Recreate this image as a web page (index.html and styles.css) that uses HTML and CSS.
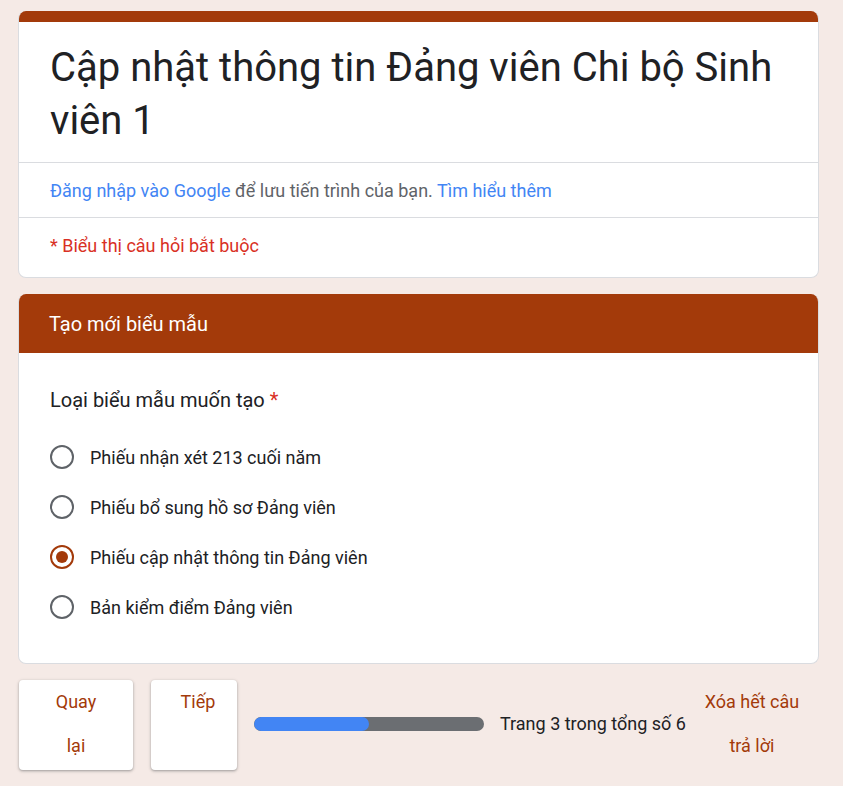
FILE: index.html
```html
<!DOCTYPE html>
<html lang="vi">
<head>
<meta charset="utf-8">
<title>Cập nhật thông tin Đảng viên Chi bộ Sinh viên 1</title>
<link rel="stylesheet" href="styles.css">
</head>
<body>
<div class="page">
  <div class="card head-card">
    <div class="topbar"></div>
    <h1 class="title">Cập nhật thông tin Đảng viên Chi bộ Sinh viên 1</h1>
    <div class="row signin"><span><a class="link">Đăng nhập vào Google</a> để lưu tiến trình của bạn. <a class="link">Tìm hiểu thêm</a></span></div>
    <div class="row required">* Biểu thị câu hỏi bắt buộc</div>
  </div>

  <div class="card section-card">
    <div class="section-head">Tạo mới biểu mẫu</div>
    <div class="question">
      <div class="q-title">Loại biểu mẫu muốn tạo <span class="star">*</span></div>
      <div class="options">
        <div class="opt"><span class="radio"></span><span>Phiếu nhận xét 213 cuối năm</span></div>
        <div class="opt"><span class="radio"></span><span>Phiếu bổ sung hồ sơ Đảng viên</span></div>
        <div class="opt"><span class="radio checked"></span><span>Phiếu cập nhật thông tin Đảng viên</span></div>
        <div class="opt"><span class="radio"></span><span>Bản kiểm điểm Đảng viên</span></div>
      </div>
    </div>
  </div>

  <div class="nav">
    <button class="btn btn-back">Quay lại</button>
    <button class="btn btn-next">Tiếp</button>
    <div class="progress"><div class="fill" style="width:50%"></div></div>
    <div class="page-count">Trang 3 trong tổng số 6</div>
    <button class="clear">Xóa hết câu trả lời</button>
  </div>
</div>
</body>
</html>
```

FILE: styles.css
```css
* { box-sizing: border-box; }
html, body { margin: 0; padding: 0; }
body {
  background: #f5eae6;
  font-family: Roboto, "Noto Sans", Arial, sans-serif;
  color: #202124;
}
.page {
  width: 801px;
  margin-left: 18px;
  padding-top: 11px;
  display: flex;
  flex-direction: column;
  gap: 16px;
}
.card {
  background: #fff;
  border: 1px solid #dadce0;
  border-radius: 8px;
  overflow: hidden;
}
.head-card { border-top: none; }
.topbar { height: 11px; background: #a33a0a; }
.title {
  margin: 0;
  font-weight: 400;
  font-size: 40px;
  line-height: 53px;
  padding: 19px 40px 15px 31px;
  border-bottom: 1px solid #dadce0;
}
.row {
  padding: 0 31px;
  font-size: 18px;
  height: 55px;
  display: flex;
  align-items: center;
}
.signin { border-bottom: 1px solid #dadce0; color: #5f6368; }
.link { color: #4285f4; }
.required { color: #d93025; height: 59px; padding-bottom: 4px; }

.section-card { border-top: none; }
.section-head {
  background: #a33a0a;
  color: #fff;
  font-size: 20px;
  height: 59px;
  display: flex;
  align-items: center;
  padding-left: 30px;
}
.question { padding: 35px 31px 31px; }
.q-title { font-size: 20px; line-height: 24px; }
.star { color: #d93025; }
.options { margin-top: 20px; display: flex; flex-direction: column; }
.opt {
  display: flex;
  align-items: center;
  height: 50px;
  font-size: 18px;
  gap: 16px;
}
.radio {
  width: 24px; height: 24px;
  border: 2px solid #5f6368;
  border-radius: 50%;
  display: flex; align-items: center; justify-content: center;
  flex: none;
}
.radio.checked { border-color: #a33a0a; }
.radio.checked::after {
  content: "";
  width: 12px; height: 12px;
  border-radius: 50%;
  background: #a33a0a;
}

.nav {
  display: flex;
  align-items: flex-start;
  padding-bottom: 16px;
}
.btn {
  background: #fff;
  border: none;
  border-radius: 4px;
  box-shadow: 0 1px 2px rgba(60,64,67,.3), 0 1px 3px 1px rgba(60,64,67,.15);
  color: #a33a0a;
  font-family: inherit;
  font-size: 18px;
  line-height: 44px;
  height: 90px;
  display: flex;
  justify-content: center;
  align-items: flex-start;
  text-align: center;
}
.btn-back { width: 114px; margin-left: 1px; padding: 0 28px; }
.btn-next { width: 86px; margin-left: 18px; padding: 0 16px 0 24px; }
.progress {
  width: 230px;
  height: 14px;
  background: #6b6e72;
  border-radius: 7px;
  overflow: hidden;
  margin: 37px 0 0 17px;
}
.fill { height: 100%; background: #4285f4; border-radius: 7px; }
.page-count {
  font-size: 18px;
  line-height: 20px;
  margin: 34px 0 0 16px;
  white-space: nowrap;
}
.clear {
  background: none;
  border: none;
  color: #a33a0a;
  font-family: inherit;
  font-size: 18px;
  line-height: 44px;
  width: 110px;
  margin-left: 11px;
  padding: 0;
  text-align: center;
}
```
